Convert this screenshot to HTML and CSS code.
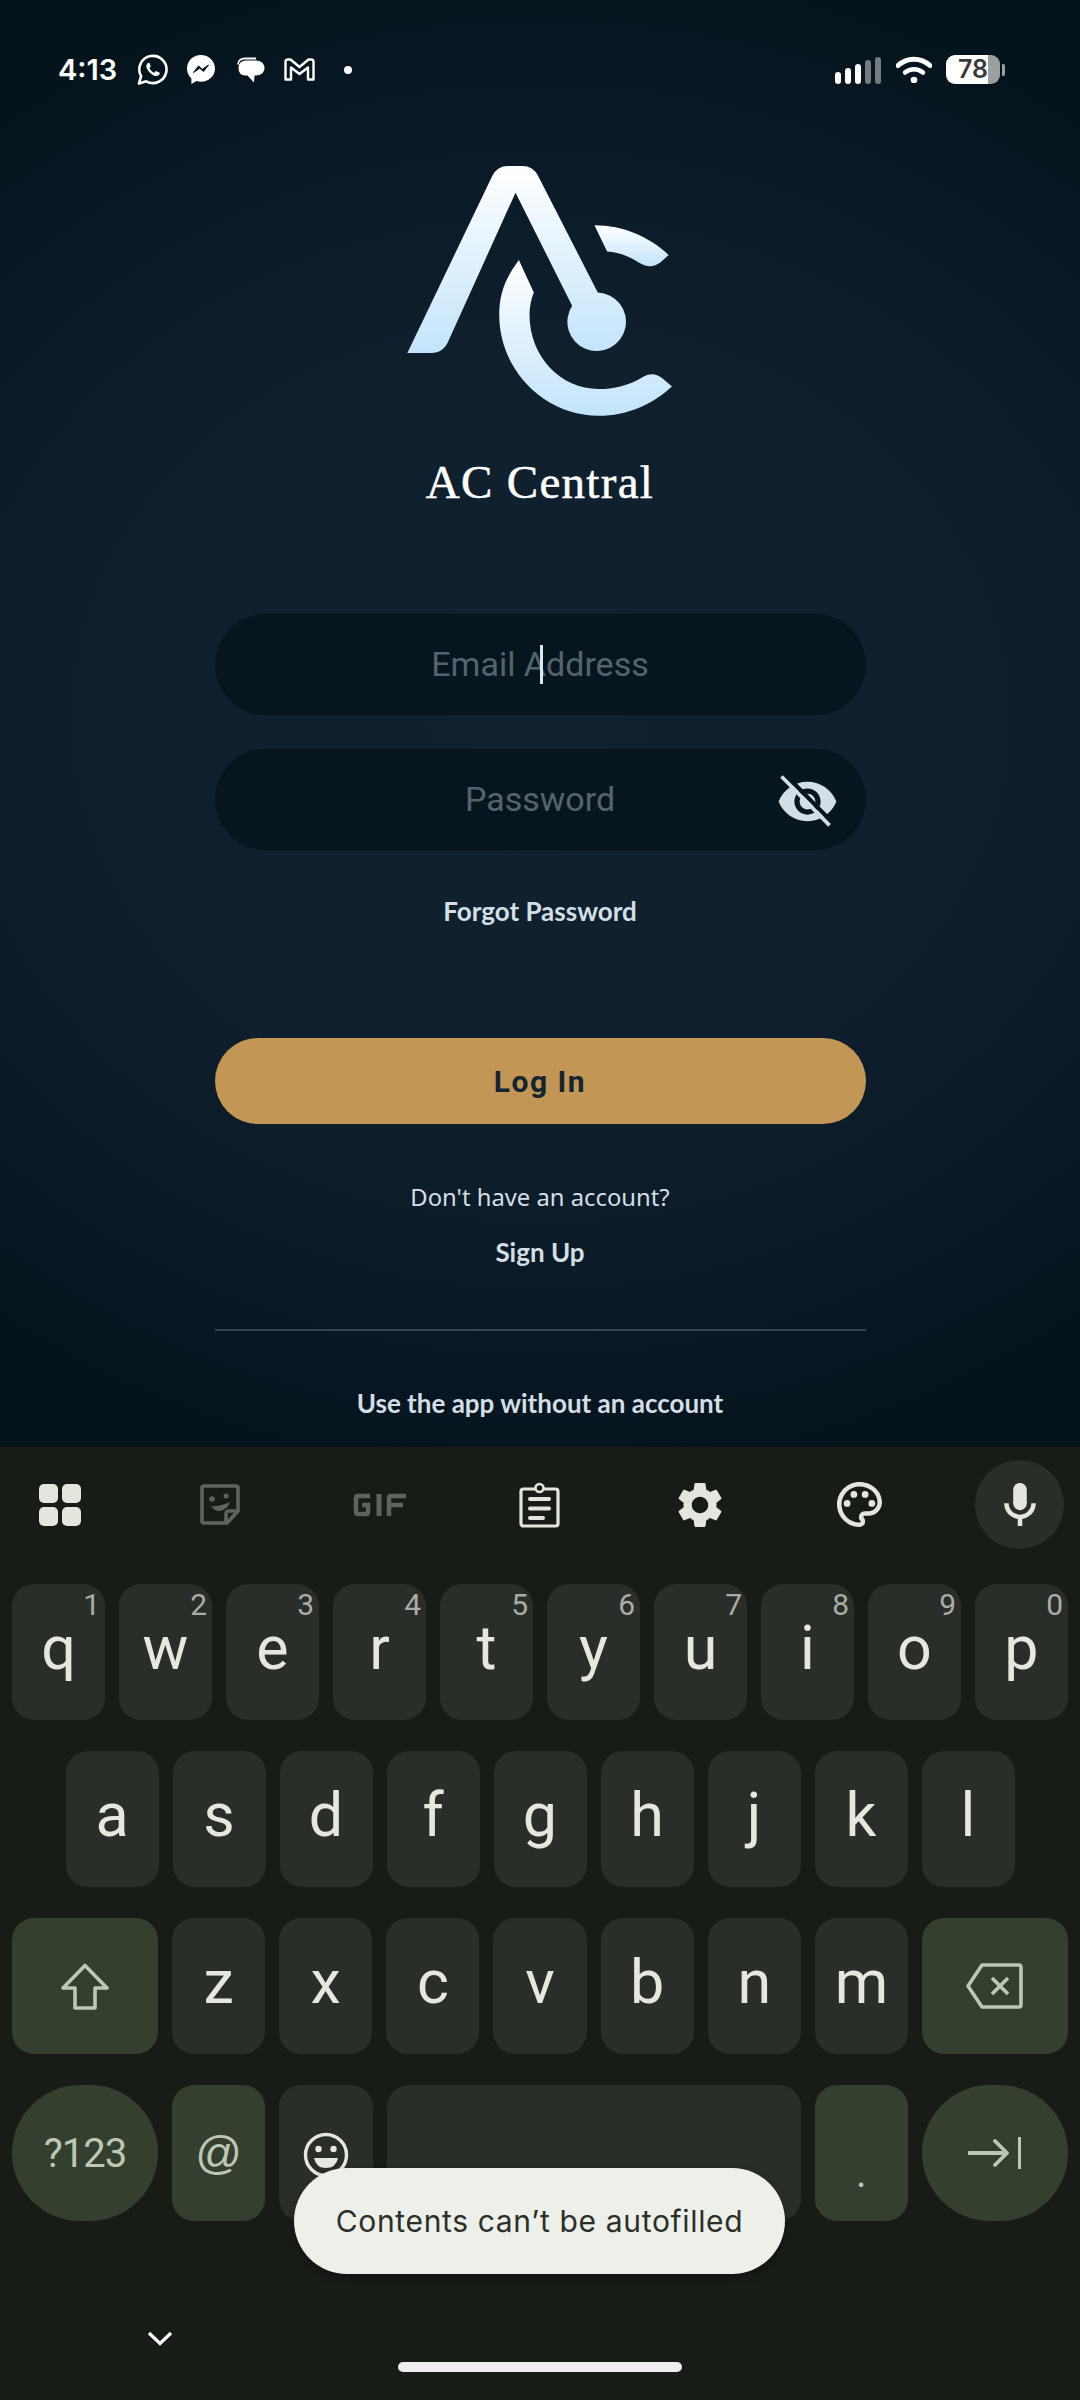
FILE: index.html
```html
<!DOCTYPE html>
<html lang="en">
<head>
    <meta charset="UTF-8">
    <meta name="viewport" content="width=device-width, initial-scale=1.0">
    <title>AC Central</title>
    <link rel="stylesheet" href="styles.css">
</head>
<body>
    <div class="app">
        <div class="status">
            <span class="time">4:13</span>
            <svg class="ic-wa" viewBox="0 0 31 31"><path d="M2 29.500l2.100-7.300A13.600 13.600 0 1 1 9.200 27.300z" fill="none" stroke="#fff" stroke-width="2.600" stroke-linejoin="round"/><path d="M11.500 8.700c-1 .2-2.300 1.700-2.200 3.500.2 3.800 5.600 9.600 9.800 9.800 1.700.1 3.300-1 3.600-2.300.1-.5 0-.9-.4-1.100l-3-1.400c-.4-.2-.7-.1-1 .2l-1.100 1.300c-2.100-.8-3.900-2.500-4.800-4.700l1-1.200c.3-.3.300-.6.200-1l-1.200-2.700c-.2-.4-.5-.5-.9-.4z" fill="#fff"/></svg>
            <svg class="ic-ms" viewBox="0 0 28 29"><path d="M14 0C6.200 0 0 5.800 0 13.500c0 4 1.700 7.500 4.400 9.900v5.600l5.200-2.900c1.400.4 2.900.6 4.400.6 7.800 0 14-5.800 14-13.200S21.800 0 14 0z" fill="#fff"/><path d="M6.500 17.500l5-6.500 3.700 3.300 6.300-4.300-5 6.500-3.700-3.300z" fill="#07161e" stroke="#07161e" stroke-width="1"/></svg>
            <svg class="ic-chat" viewBox="0 0 28 26"><path d="M1 7.500C1 3.500 4 1.500 8 1.500h11" fill="none" stroke="#fff" stroke-width="1.800"/><path d="M9 3.500h10c5 0 8.500 3 8.500 7.500s-3.500 7.500-8.500 7.500h-1.500l-.5 7-6.500-7H8C4 18.500 1.500 15.500 1.500 11c0-4.500 3-7.500 7.500-7.500z" fill="#fff"/></svg>
            <svg class="ic-gm" viewBox="0 0 31 23"><path d="M1.500 4Q1.500 1.500 4 1.500H6.500L15.500 9 24.500 1.500H27Q29.500 1.500 29.500 4V21.500H24V9.500L15.500 16 7 9.500V21.500H1.500z" fill="none" stroke="#fff" stroke-width="2.400" stroke-linejoin="round"/></svg>
            <span class="dot"></span>
            <span class="status-fill"></span>
            <div class="signal">
                <i class="b1"></i><i class="b2"></i><i class="b3"></i><i class="b4 dim"></i><i class="b5 dim"></i>
            </div>
            <svg class="ic-wifi" viewBox="0 0 36 27"><path d="M2 9.500C11 1 25 1 34 9.500" fill="none" stroke="#fff" stroke-width="5" stroke-linecap="round"/><path d="M9 16.500C14 12 22 12 27 16.500" fill="none" stroke="#fff" stroke-width="4.500" stroke-linecap="round"/><circle cx="18" cy="24" r="3.300" fill="#fff"/></svg>
            <div class="battery">78</div>
            <span class="battery-tip"></span>
        </div>

        <main class="login">
            <svg class="logo" viewBox="80 75 800 760">
                <defs>
                    <linearGradient id="lg" x1="0" y1="0" x2="0" y2="1">
                        <stop offset="0" stop-color="#ffffff"/>
                        <stop offset="1" stop-color="#c3e4fb"/>
                    </linearGradient>
                </defs>
                <path fill="url(#lg)" d="M80 640L335 108Q350 78 382 78L425 78Q458 78 473 108L652 458A88 88 0 1 1 575 498L405 158L205 600Q190 640 150 640Z"/>
                <path fill="url(#lg)" d="M415 360C375 415 356 460 356 525C356 690 490 828 655 828C740 828 815 795 875 740L845 715Q820 695 790 710C745 738 700 748 655 748C540 748 447 650 447 525Q447 490 460 458Z"/>
                <path fill="url(#lg)" d="M642 256C730 256 805 290 865 345L840 368Q810 390 775 368C745 348 715 338 680 335Z"/>
            </svg>
            <h1 class="brand">AC Central</h1>

            <div class="field first">
                <span class="ph">Email Address</span>
                <span class="caret"></span>
            </div>
            <div class="field">
                <span class="ph">Password</span>
                <svg class="eye" viewBox="0 0 24 24"><path fill="#d3dfe5" d="M12 4.500C7 4.500 2.730 7.610 1 12c1.730 4.390 6 7.500 11 7.500s9.270-3.110 11-7.500c-1.730-4.390-6-7.500-11-7.500zM12 17c-2.760 0-5-2.240-5-5s2.240-5 5-5 5 2.240 5 5-2.240 5-5 5zm0-8c-1.660 0-3 1.340-3 3s1.340 3 3 3 3-1.340 3-3-1.340-3-3-3z"/><path d="M3.300 1.500L21.600 20.100" stroke="#07161e" stroke-width="1.600"/><path d="M2.100 2.500L20.400 21.100" stroke="#d3dfe5" stroke-width="1.400"/></svg>
            </div>

            <a class="link forgot">Forgot Password</a>
            <button class="btn">Log In</button>
            <p class="ask">Don't have an account?</p>
            <a class="link signup">Sign Up</a>
            <div class="divider"></div>
            <a class="link guest">Use the app without an account</a>
        </main>

        <div class="keyboard">
            <div class="tools">
                <span class="tool"><svg class="i-grid" viewBox="0 0 42 42"><rect width="19" height="19" rx="5"/><rect x="23" width="19" height="19" rx="5"/><rect y="23" width="19" height="19" rx="5"/><rect x="23" y="23" width="19" height="19" rx="5"/></svg></span>
                <span class="tool"><svg class="i-sticker" viewBox="0 0 40 41"><path d="M4 2h32q2 0 2 2v23L27 39H4q-2 0-2-2V4q0-2 2-2z" fill="none" stroke="#5f635e" stroke-width="3.600"/><path d="M26 39V30q0-3 3-3h9" fill="none" stroke="#5f635e" stroke-width="3.600"/><circle cx="12" cy="15" r="2.800" fill="#5f635e"/><circle cx="26" cy="12" r="2.500" fill="#5f635e"/><path d="M11 22q8 1 19-4-3 8-10 9-6 0-9-5z" fill="#5f635e"/></svg></span>
                <span class="tool"><svg class="i-gif" viewBox="0 0 54 24"><path d="M17 3H5Q3 3 3 5V19Q3 21 5 21H13Q15 21 15 19V12H9" fill="none" stroke="#5f635e" stroke-width="4.500"/><path d="M26 1V23" stroke="#5f635e" stroke-width="5"/><path d="M36 23V5Q36 3 38 3H53M36 12H50" fill="none" stroke="#5f635e" stroke-width="4.500"/></svg></span>
                <span class="tool"><svg class="i-clip" viewBox="0 0 41 46"><rect x="2" y="7" width="37" height="37" rx="2.500" fill="none" stroke="#e2e6dc" stroke-width="3.200"/><circle cx="20.500" cy="6" r="4" fill="#181c17" stroke="#e2e6dc" stroke-width="2.600"/><path d="M11 17H30M11 26.500H30M11 36H24" stroke="#e2e6dc" stroke-width="4" stroke-linecap="round"/></svg></span>
                <span class="tool"><svg class="i-gear" viewBox="2.400 2 19.200 20"><path fill="#e2e6dc" d="M19.140 12.940c.04-.3.06-.61.06-.94 0-.32-.02-.64-.07-.94l2.030-1.580c.18-.14.23-.41.12-.61l-1.920-3.320c-.12-.22-.37-.29-.59-.22l-2.390.96c-.5-.38-1.030-.7-1.620-.94l-.36-2.540c-.04-.24-.24-.41-.48-.41h-3.840c-.24 0-.43.17-.47.41l-.36 2.540c-.59.24-1.130.57-1.620.94l-2.390-.96c-.22-.08-.47 0-.59.22L2.740 8.870c-.12.21-.08.47.12.61l2.030 1.580c-.05.3-.09.63-.09.94s.02.64.07.94l-2.030 1.580c-.18.14-.23.41-.12.61l1.920 3.320c.12.22.37.29.59.22l2.390-.96c.5.38 1.030.7 1.620.94l.36 2.540c.05.24.24.41.48.41h3.840c.24 0 .44-.17.47-.41l.36-2.540c.59-.24 1.130-.56 1.620-.94l2.390.96c.22.08.47 0 .59-.22l1.920-3.320c.12-.22.07-.47-.12-.61l-2.010-1.580zM12 15.600c-1.980 0-3.600-1.620-3.600-3.600s1.620-3.600 3.600-3.600 3.600 1.620 3.600 3.600-1.620 3.600-3.600 3.600z"/></svg></span>
                <span class="tool"><svg class="i-pal" viewBox="2 2 20 20"><path fill="#e2e6dc" d="M12 22C6.490 22 2 17.510 2 12S6.490 2 12 2s10 4.040 10 9c0 3.310-2.690 6-6 6h-1.770c-.28 0-.5.22-.5.5 0 .12.05.23.13.33.41.47.64 1.060.64 1.670A2.500 2.500 0 0 1 12 22zm0-18c-4.410 0-8 3.590-8 8s3.590 8 8 8c.28 0 .5-.22.5-.5a.54.54 0 0 0-.14-.35c-.41-.46-.63-1.050-.63-1.650a2.500 2.500 0 0 1 2.500-2.500H16c2.210 0 4-1.790 4-4 0-3.860-3.590-7-8-7z"/><circle fill="#e2e6dc" cx="6.500" cy="11.500" r="1.500"/><circle fill="#e2e6dc" cx="9.500" cy="7.500" r="1.500"/><circle fill="#e2e6dc" cx="14.500" cy="7.500" r="1.500"/><circle fill="#e2e6dc" cx="17.500" cy="11.500" r="1.500"/></svg></span>
                <span class="tool mic"><svg class="i-mic" viewBox="5 2 14 19"><path fill="#e2e6dc" d="M12 14c1.660 0 3-1.340 3-3V5c0-1.660-1.340-3-3-3S9 3.340 9 5v6c0 1.660 1.340 3 3 3z"/><path fill="#e2e6dc" d="M17 11c0 2.760-2.240 5-5 5s-5-2.240-5-5H5c0 3.530 2.610 6.430 6 6.920V21h2v-3.080c3.390-.49 6-3.390 6-6.920h-2z"/></svg></span>
            </div>

            <div class="row">
                <div class="key">q<sup>1</sup></div>
                <div class="key">w<sup>2</sup></div>
                <div class="key">e<sup>3</sup></div>
                <div class="key">r<sup>4</sup></div>
                <div class="key">t<sup>5</sup></div>
                <div class="key">y<sup>6</sup></div>
                <div class="key">u<sup>7</sup></div>
                <div class="key">i<sup>8</sup></div>
                <div class="key">o<sup>9</sup></div>
                <div class="key">p<sup>0</sup></div>
            </div>
            <div class="row home">
                <div class="key">a</div>
                <div class="key">s</div>
                <div class="key">d</div>
                <div class="key">f</div>
                <div class="key">g</div>
                <div class="key">h</div>
                <div class="key">j</div>
                <div class="key">k</div>
                <div class="key">l</div>
            </div>
            <div class="row">
                <div class="key wide fn"><svg class="i-shift" viewBox="0 0 50 47"><path d="M25 2.500L47 25H35V45H15V25H3Z" fill="none" stroke="#bcc7b5" stroke-width="3.600" stroke-linejoin="round"/></svg></div>
                <div class="key">z</div>
                <div class="key">x</div>
                <div class="key">c</div>
                <div class="key">v</div>
                <div class="key">b</div>
                <div class="key">n</div>
                <div class="key">m</div>
                <div class="key wide fn"><svg class="i-back" viewBox="0 0 57 46"><path d="M16 2H53Q55 2 55 4V42Q55 44 53 44H16L2 23Z" fill="none" stroke="#bcc7b5" stroke-width="3.600" stroke-linejoin="round"/><path d="M26 15L42 31M42 15L26 31" stroke="#bcc7b5" stroke-width="3.600"/></svg></div>
            </div>
            <div class="row">
                <div class="key wide fn pill sym">?123</div>
                <div class="key fn at">@</div>
                <div class="key emoji"><svg class="i-emoji" viewBox="0 0 46 46"><circle cx="23" cy="23" r="20.500" fill="none" stroke="#e5e8df" stroke-width="3.400"/><circle cx="15.500" cy="17" r="3.200" fill="#e5e8df"/><circle cx="30.500" cy="17" r="3.200" fill="#e5e8df"/><path d="M11 26H35Q33 36 23 36T11 26Z" fill="#e5e8df"/></svg></div>
                <div class="key space"></div>
                <div class="key fn period">.</div>
                <div class="key wide fn pill"><svg class="i-next" viewBox="0 0 54 32"><path d="M1 16H38M27 4L39 16 27 28" fill="none" stroke="#bcc7b5" stroke-width="3.800" stroke-linecap="round" stroke-linejoin="round"/><path d="M51.500 0V32" stroke="#bcc7b5" stroke-width="3"/></svg></div>
            </div>

            <div class="navbar">
                <svg class="i-chev" viewBox="0 0 26 15"><path d="M2 2L13 12.500 24 2" fill="none" stroke="#fff" stroke-width="3.200"/></svg>
                <span class="handle"></span>
            </div>
        </div>

        <div class="toast">Contents can’t be autofilled</div>
    </div>
</body>
</html>
```

FILE: styles.css
```css
body {
    margin: 0;
    padding: 0;
    background: #181c17;
    font-family: Roboto, sans-serif;
}

svg {
    display: block;
    flex: none;
}

.app {
    position: relative;
    width: 1080px;
    height: 2400px;
    overflow: hidden;
    display: flex;
    flex-direction: column;
}

/* status bar */
.status {
    height: 31px;
    padding: 54px 75px 0 58px;
    display: flex;
    align-items: center;
    position: relative;
    z-index: 1;
}

.time {
    color: #fff;
    font-family: Inter, sans-serif;
    font-size: 29px;
    font-weight: 600;
    width: 79px;
}

.ic-wa { width: 31px; height: 31px; }
.ic-ms { width: 28px; height: 29px; margin-left: 19px; }
.ic-chat { width: 28px; height: 26px; margin-left: 22px; }
.ic-gm { width: 31px; height: 23px; margin-left: 19px; }

.dot {
    width: 8px;
    height: 8px;
    border-radius: 50%;
    background: #fff;
    margin-left: 29px;
}

.status-fill {
    flex: 1;
}

.signal {
    display: flex;
    align-items: flex-end;
    gap: 4.300px;
    height: 27px;
    margin-top: 2px;
}

.signal i {
    width: 5.700px;
    border-radius: 3px;
    background: #fff;
}

.signal .dim {
    background: #767c80;
}

.b1 { height: 12px; }
.b2 { height: 16px; }
.b3 { height: 20px; }
.b4 { height: 24px; }
.b5 { height: 27px; }

.ic-wifi {
    width: 36px;
    height: 27px;
    margin-left: 15px;
}

.battery {
    width: 54px;
    height: 29px;
    margin-left: 14px;
    border-radius: 9px;
    background: linear-gradient(90deg, #fff 42px, #9a9fa2 42px);
    color: #3a3a3a;
    font-family: Inter, sans-serif;
    font-size: 25px;
    font-weight: 600;
    line-height: 29px;
    text-align: center;
}

.battery-tip {
    width: 3px;
    height: 12px;
    margin-left: 2px;
    background: #9a9fa2;
    border-radius: 0 2px 2px 0;
}

/* login */
.login {
    position: absolute;
    top: 0;
    left: 0;
    width: 1080px;
    height: 1447px;
    box-sizing: border-box;
    padding-top: 165px;
    display: flex;
    flex-direction: column;
    align-items: center;
    background: radial-gradient(ellipse 900px 770px at 540px 720px, #11222f 0%, #0f1f2d 50%, #081722 85%, #05131b 100%);
}

.logo {
    width: 267px;
    height: 253px;
}

.brand {
    margin: 36px 0 0;
    color: #fff;
    font-family: "Liberation Serif", serif;
    font-size: 47px;
    font-weight: 400;
    letter-spacing: 1.300px;
    -webkit-text-stroke: 0.5px #fff;
    line-height: 56px;
}

.field {
    position: relative;
    width: 651px;
    height: 101px;
    border-radius: 51px;
    background: #07161e;
    display: flex;
    align-items: center;
    justify-content: center;
    margin-top: 34px;
}

.field.first {
    margin-top: 104px;
}

.ph {
    color: #55646c;
    font-size: 34px;
    padding-bottom: 2px;
}

.caret {
    position: absolute;
    left: 325px;
    top: 31px;
    width: 3px;
    height: 39px;
    background: #dde8ee;
}

.eye {
    position: absolute;
    right: 26.500px;
    top: 20.500px;
    width: 63px;
    height: 63px;
}

.link {
    color: #d3dfe5;
    font-family: Lato, sans-serif;
    font-size: 26px;
    font-weight: 700;
    line-height: 34px;
}

.forgot {
    margin-top: 44px;
}

.btn {
    width: 651px;
    height: 86px;
    margin-top: 110px;
    border: none;
    border-radius: 43px;
    background: #c29655;
    color: #142431;
    font-family: Roboto, sans-serif;
    font-size: 30px;
    font-weight: 700;
    letter-spacing: 1.500px;
}

.ask {
    margin: 56px 0 0;
    color: #d3dfe5;
    font-family: "Noto Sans", sans-serif;
    font-size: 23.800px;
    line-height: 34px;
}

.signup {
    margin-top: 21px;
}

.divider {
    width: 651px;
    height: 2px;
    margin-top: 60px;
    background: #35444f;
}

.guest {
    margin-top: 55px;
}

/* keyboard */
.keyboard {
    position: absolute;
    top: 1447px;
    left: 0;
    width: 1080px;
    height: 953px;
    background: #181c17;
}

.tools {
    display: flex;
    gap: 71px;
    padding: 13px 0 0 15px;
    height: 89px;
    margin-bottom: 35px;
}

.tool {
    width: 89px;
    height: 89px;
    flex: none;
    display: flex;
    align-items: center;
    justify-content: center;
}

.mic {
    border-radius: 50%;
    background: #2a2e28;
}

.i-grid { width: 42px; height: 42px; fill: #e2e6dc; }
.i-sticker { width: 40px; height: 41px; }
.i-gif { width: 54px; height: 24px; }
.i-clip { width: 41px; height: 46px; }
.i-gear { width: 44px; height: 46px; }
.i-pal { width: 45px; height: 45px; }
.i-mic { width: 32px; height: 43px; }

.row {
    display: flex;
    gap: 14px;
    padding: 0 12px;
    height: 136px;
    margin-bottom: 31px;
}

.row.home {
    padding: 0 65.500px;
}

.key {
    position: relative;
    flex: 1;
    box-sizing: border-box;
    padding-bottom: 8px;
    display: flex;
    align-items: center;
    justify-content: center;
    border-radius: 22px;
    background: #2a2e28;
    color: #e5e8df;
    font-family: Roboto, sans-serif;
    font-size: 61px;
}

.key sup {
    position: absolute;
    top: 4px;
    right: 5px;
    color: #a8aca6;
    font-family: Roboto, sans-serif;
    font-size: 30px;
    line-height: 34px;
}

.key.wide {
    flex: none;
    width: 146px;
    padding-bottom: 0;
}

.fn {
    background: #353f30;
    color: #bcc7b5;
}

.pill {
    border-radius: 68px;
}

.sym {
    font-size: 40px;
    letter-spacing: -1px;
}

.at {
    font-family: "Liberation Sans", sans-serif;
    font-size: 46px;
    padding-bottom: 0;
}

.key.emoji {
    padding: 3px 0 0;
}

.key.space {
    flex: none;
    width: 414px;
}

.period {
    font-size: 40px;
    padding: 40px 0 0;
}

.i-shift { width: 50px; height: 47px; }
.i-back { width: 57px; height: 46px; }
.i-next { width: 54px; height: 32px; }
.i-emoji { width: 46px; height: 46px; }

.navbar {
    position: relative;
    height: 100px;
}

.i-chev {
    position: absolute;
    left: 147px;
    top: 79px;
    width: 26px;
    height: 15px;
}

.handle {
    position: absolute;
    left: 398px;
    top: 110px;
    width: 284px;
    height: 10px;
    border-radius: 5px;
    background: #eeeeee;
}

.toast {
    position: absolute;
    left: 294px;
    top: 2168px;
    width: 491px;
    height: 106px;
    border-radius: 53px;
    background: #edf0e8;
    color: #2b2f2a;
    font-family: Inter, sans-serif;
    font-size: 30px;
    letter-spacing: 0.650px;
    line-height: 106px;
    text-align: center;
    box-shadow: 0 4px 10px rgba(0, 0, 0, 0.3);
}
```
